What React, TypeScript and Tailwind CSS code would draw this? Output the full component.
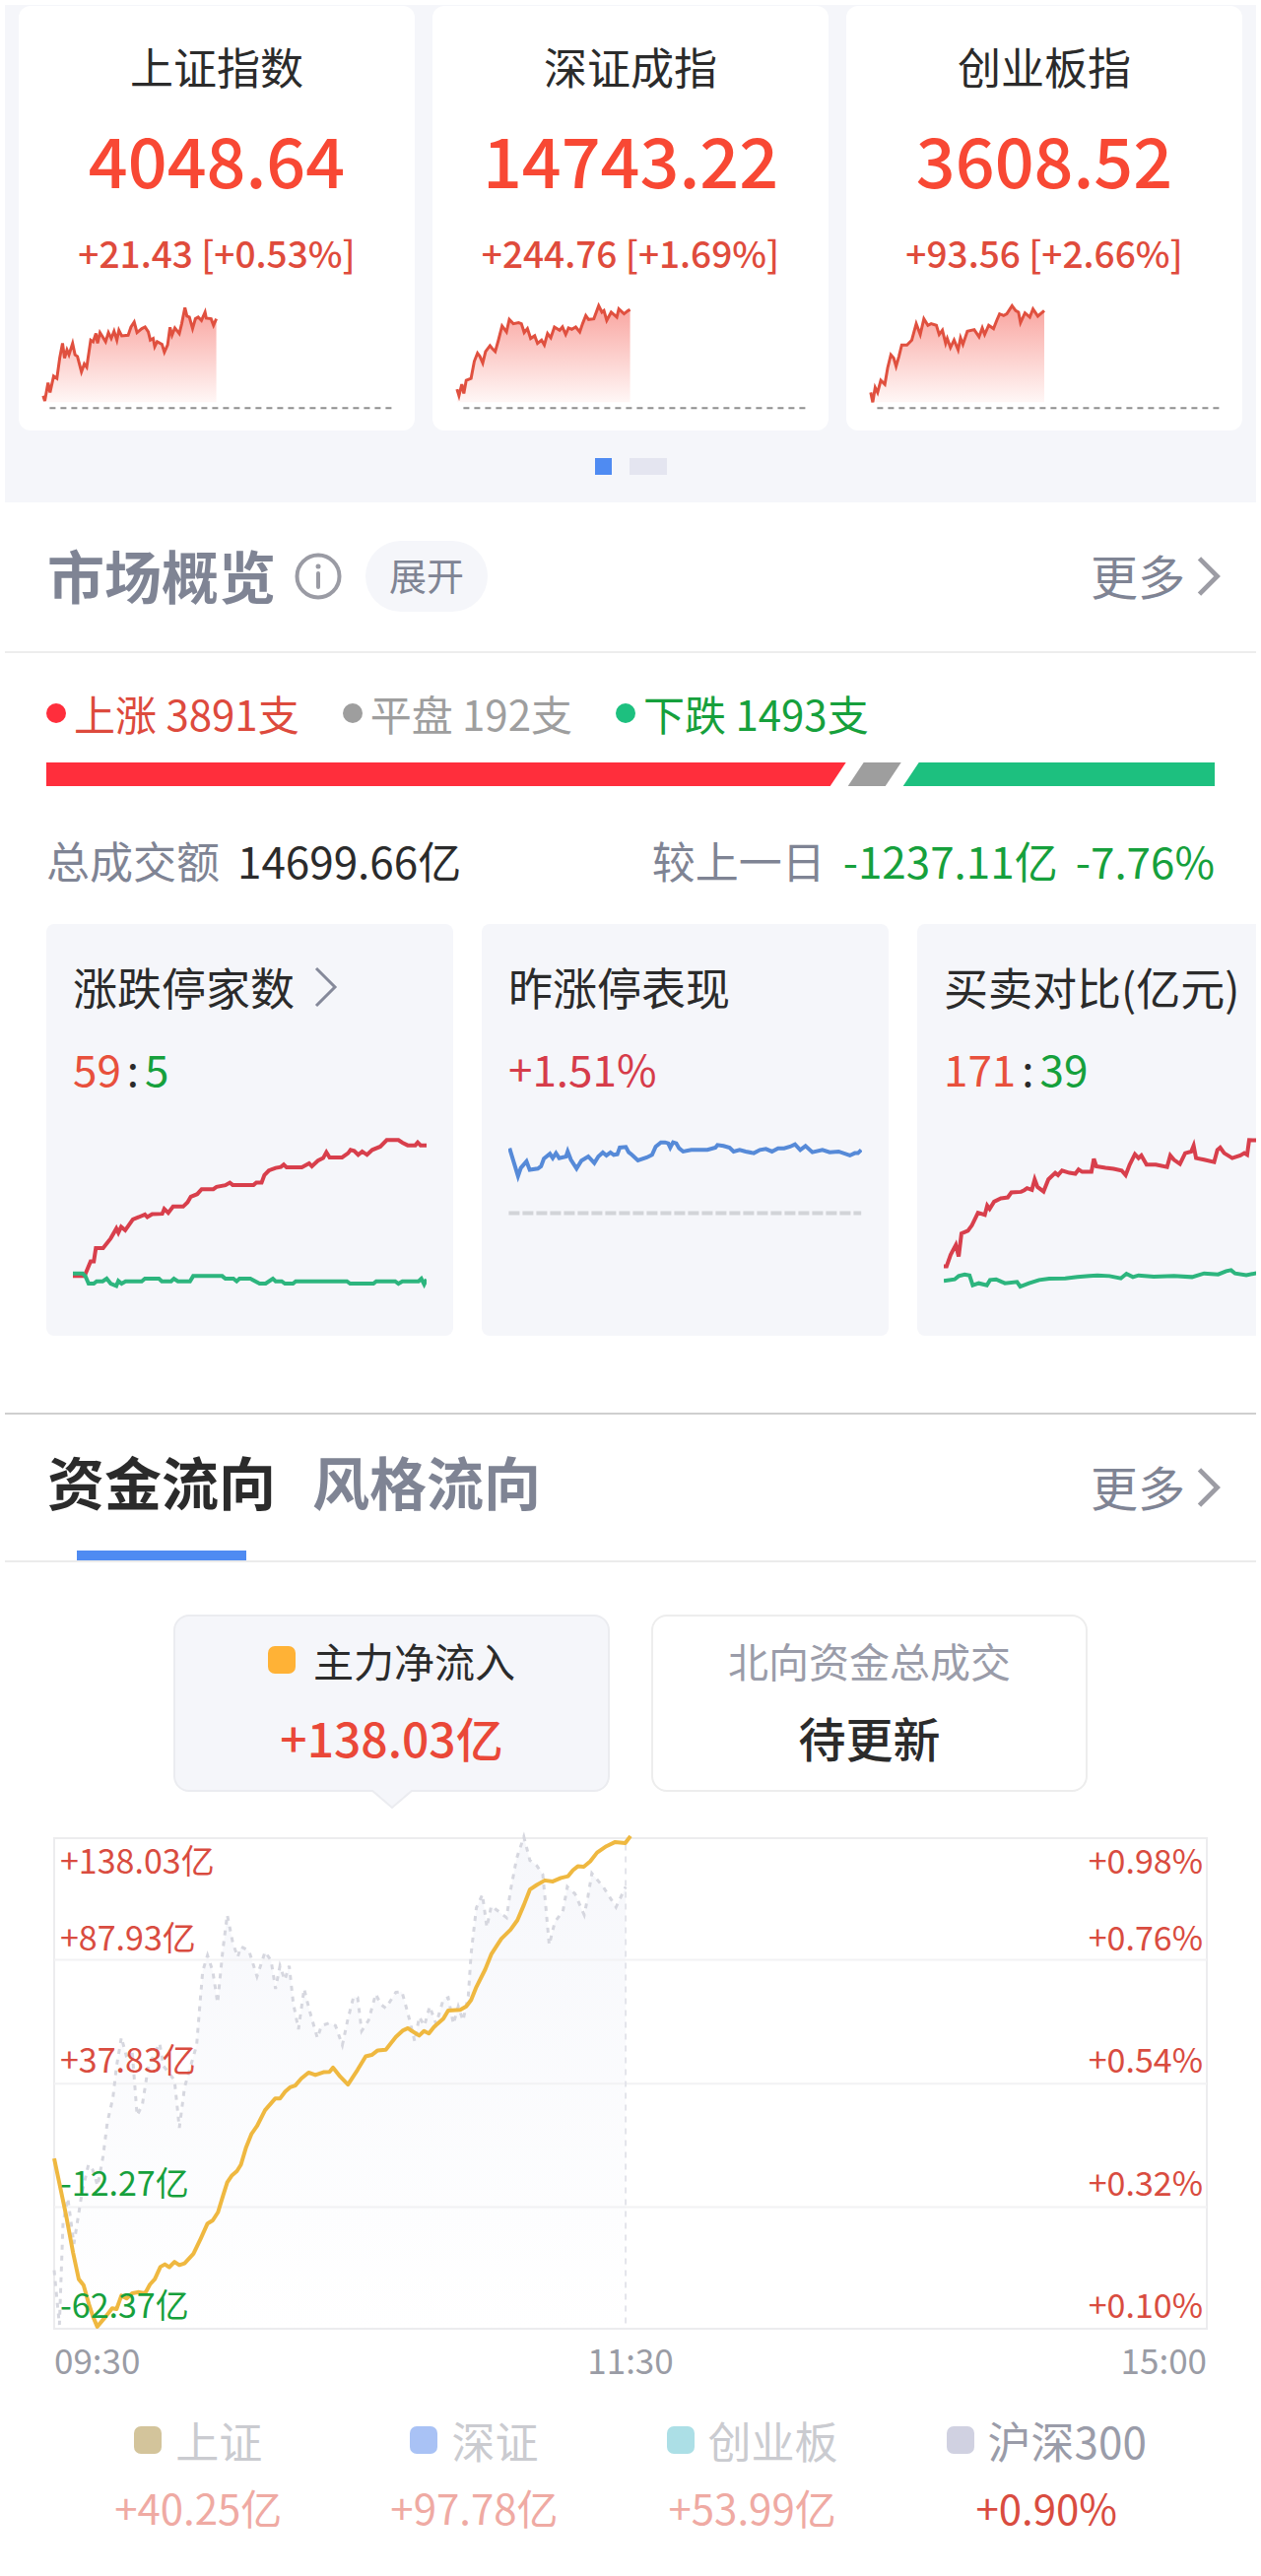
import { useState } from 'react';
import type { ReactNode } from 'react';

type IndexQuote = {
  name: string;
  price: string;
  change: string;
  viewBox: string;
  baseline: string;
  line: string;
};

const quotes: IndexQuote[] = [
  {
    name: '上证指数',
    price: '4048.64',
    change: '+21.43 [+0.53%]',
    viewBox: '100 920 876 340',
    baseline: 'M123 1243H976',
    line: '107,1205 111,1221 119,1165 124,1195 133,1145 141,1152 148,1090 155,1045 160,1090 166,1065 171,1080 180,1045 186,1080 192,1085 202,1132 209,1108 215,1118 225,1035 231,1040 238,1015 242,1045 248,1012 262,1040 269,1012 276,1030 283,1008 290,1035 295,1005 302,1022 318,1020 325,995 333,980 340,1012 352,1000 360,995 368,1010 373,1035 380,1030 384,1055 390,1040 402,1048 408,1072 416,1050 422,996 427,1020 434,998 445,1015 451,985 459,936 464,962 470,965 478,1000 485,970 492,965 500,975 509,950 512,968 524,970 530,990 537,970',
  },
  {
    name: '深证成指',
    price: '14743.22',
    change: '+244.76 [+1.69%]',
    viewBox: '1128 920 876 340',
    baseline: 'M1151 1243H2004',
    line: '1135,1185 1140,1205 1147,1170 1152,1198 1158,1158 1170,1152 1178,1100 1186,1075 1192,1085 1199,1105 1206,1070 1217,1052 1222,1060 1230,1070 1238,1035 1247,992 1258,1010 1265,972 1275,985 1288,982 1295,985 1302,1012 1310,1000 1318,1030 1328,1022 1335,1045 1345,1035 1352,1050 1360,1015 1368,1028 1377,995 1390,1005 1397,995 1405,1018 1412,998 1420,1002 1430,995 1440,1010 1447,985 1455,960 1462,972 1475,970 1487,930 1495,950 1500,945 1507,975 1518,950 1532,965 1537,940 1550,955 1560,945 1565,942',
  },
  {
    name: '创业板指',
    price: '3608.52',
    change: '+93.56 [+2.66%]',
    viewBox: '588 920 876 340',
    baseline: 'M611 1243H1464',
    line: '595,1195 600,1225 606,1180 612,1195 620,1158 630,1170 637,1120 645,1080 652,1090 658,1115 665,1085 672,1050 685,1050 697,1035 708,985 718,1018 727,970 737,990 745,985 758,990 765,1018 773,1005 781,1045 785,1030 793,1058 802,1035 812,1065 818,1028 824,1048 835,1008 852,1003 864,1025 872,998 878,1018 888,990 900,1000 908,975 915,955 925,960 933,955 946,930 955,945 962,950 967,982 978,952 990,965 998,940 1010,962 1026,945',
  },
];

const breadth = [
  { label: '上涨 3891支', text: 'text-[#dd4a3d]', dot: 'bg-[#ff2e3c]', bar: 'bg-[#ff2e3c] [clip-path:polygon(0_0,100%_0,calc(100%-16px)_100%,0_100%)]', share: 811 },
  { label: '平盘 192支', text: 'text-[#9e9e9e]', dot: 'bg-[#9e9e9e]', bar: 'bg-[#9e9e9e] [clip-path:polygon(16px_0,100%_0,calc(100%-16px)_100%,0_100%)]', share: 54 },
  { label: '下跌 1493支', text: 'text-[#16a03c]', dot: 'bg-[#1dc07f]', bar: 'bg-[#1dc07f] [clip-path:polygon(16px_0,100%_0,100%_100%,0_100%)]', share: 316 },
];

const limitUp =
  '181,1130 210,1130 225,1085 233,1085 238,1045 256,1045 275,1015 289,985 294,998 301,980 311,990 330,957 345,950 360,942 366,950 378,941 403,940 408,925 418,937 430,918 455,918 466,905 474,888 490,880 501,865 530,865 538,858 560,853 571,845 578,852 630,852 637,845 650,845 657,822 668,808 685,800 698,797 705,790 712,798 750,798 768,786 775,795 790,778 803,770 811,752 819,768 850,768 865,755 871,745 880,748 890,760 900,750 912,760 925,745 945,735 961,715 990,715 1000,723 1013,731 1032,731 1038,722 1045,731 1060,731';
const limitDown =
  '181,1122 205,1122 212,1130 220,1153 233,1153 240,1146 255,1146 265,1138 275,1153 289,1160 294,1145 302,1153 312,1146 352,1146 360,1138 395,1138 402,1146 425,1146 432,1138 442,1146 472,1146 480,1130 552,1130 560,1138 580,1138 588,1146 595,1138 622,1138 645,1153 660,1153 678,1138 685,1146 700,1146 708,1153 728,1153 735,1146 862,1146 870,1153 928,1153 935,1146 982,1146 990,1153 1000,1146 1040,1146 1047,1138 1054,1155 1060,1140';
const yesterday =
  '1265,740 1286,825 1293,800 1307,780 1315,806 1335,802 1343,795 1350,772 1365,757 1372,770 1380,755 1388,770 1405,765 1409,750 1417,775 1431,802 1443,778 1460,765 1475,785 1485,765 1496,753 1505,762 1515,753 1523,760 1532,758 1538,738 1553,736 1560,752 1568,760 1583,777 1605,768 1618,760 1627,735 1640,722 1650,722 1658,725 1663,738 1670,722 1678,725 1685,740 1695,750 1715,745 1735,745 1755,745 1775,738 1780,730 1795,733 1810,738 1820,750 1835,745 1850,750 1870,755 1885,745 1900,742 1915,750 1930,740 1945,740 1960,735 1972,728 1985,745 1998,733 2015,752 2040,745 2058,752 2080,750 2108,762 2120,755 2128,755 2136,745';
const buyers =
  '778,1100 785,1100 795,1065 808,1035 815,1070 822,1000 838,992 848,975 863,937 880,943 886,915 892,925 903,903 920,893 937,890 946,875 970,873 978,868 985,862 997,867 1004,835 1011,858 1026,872 1038,835 1055,815 1062,822 1072,808 1090,815 1105,818 1113,805 1122,812 1145,812 1151,772 1157,795 1180,800 1200,803 1220,808 1230,822 1240,790 1253,758 1262,770 1269,762 1282,790 1305,790 1333,797 1341,762 1350,775 1365,788 1378,755 1393,750 1399,732 1405,770 1425,775 1450,782 1458,745 1465,738 1475,755 1495,770 1515,762 1525,755 1532,760 1537,715 1560,716 1600,712 1657,708';
const sellers =
  '778,1145 805,1140 815,1130 830,1125 842,1128 850,1158 865,1152 885,1158 893,1142 908,1140 930,1152 960,1148 968,1162 990,1152 1015,1142 1040,1138 1080,1137 1110,1133 1140,1130 1160,1128 1190,1130 1218,1137 1232,1123 1248,1133 1262,1128 1300,1132 1350,1130 1395,1133 1425,1122 1460,1125 1480,1115 1492,1112 1502,1122 1530,1127 1560,1120 1657,1116';

const mainFlow =
  '136,982 165,1140 183,1250 197,1325 209,1342 222,1395 232,1430 243,1460 265,1430 280,1408 291,1410 303,1372 316,1380 330,1365 347,1362 362,1365 374,1340 386,1325 400,1290 411,1283 422,1291 435,1276 447,1285 460,1280 482,1253 500,1210 517,1167 530,1158 543,1135 555,1090 566,1050 578,1030 590,1018 600,1000 613,950 626,913 640,890 660,845 685,812 697,812 710,792 722,780 735,775 750,755 768,738 785,745 805,737 820,736 829,724 847,750 866,772 890,730 910,692 925,688 940,675 960,673 985,637 1003,618 1015,612 1025,620 1043,633 1055,620 1067,627 1080,608 1103,585 1115,562 1145,560 1160,550 1172,532 1185,495 1207,445 1222,402 1247,358 1270,332 1287,305 1303,262 1318,218 1335,205 1355,192 1375,195 1395,185 1413,180 1425,163 1437,152 1452,153 1468,138 1485,113 1508,95 1530,83 1555,86 1568,66';
const hs300 =
  '136,1300 149,1455 158,1165 170,1095 185,1225 205,1080 221,1000 232,1015 244,1060 257,980 268,880 282,810 291,720 303,638 315,690 330,680 342,860 355,830 370,720 398,655 408,720 435,760 447,895 460,780 475,720 490,660 497,560 505,450 517,405 530,450 542,540 555,390 566,290 580,370 592,410 600,380 620,392 640,465 660,395 675,420 686,500 697,435 709,475 720,435 730,540 743,615 757,500 770,560 790,640 800,605 820,597 835,605 852,660 865,590 880,522 890,525 900,620 917,590 935,515 948,545 960,555 985,510 1000,508 1015,570 1032,650 1043,580 1056,605 1069,550 1085,600 1103,530 1115,525 1128,600 1140,550 1152,590 1165,520 1172,400 1185,270 1200,232 1211,325 1222,265 1240,280 1260,298 1270,220 1285,130 1303,68 1318,135 1335,150 1350,175 1357,260 1366,375 1380,310 1400,280 1411,210 1430,230 1453,290 1462,240 1472,172 1500,210 1532,268 1556,210';

const axisRows = [
  ['+87.93亿', '+0.76%', 'text-[#d94c40]'],
  ['+37.83亿', '+0.54%', 'text-[#d94c40]'],
  ['-12.27亿', '+0.32%', 'text-[#16a03c]'],
  ['-62.37亿', '+0.10%', 'text-[#16a03c]'],
];

const legend = [
  { name: '上证', value: '+40.25亿', swatch: 'bg-[#d3c49b]', label: 'text-[#cacbd0]', tone: 'text-[#efaaa3]' },
  { name: '深证', value: '+97.78亿', swatch: 'bg-[#a9c2f5]', label: 'text-[#cacbd0]', tone: 'text-[#efaaa3]' },
  { name: '创业板', value: '+53.99亿', swatch: 'bg-[#acdfe6]', label: 'text-[#cacbd0]', tone: 'text-[#efaaa3]' },
  { name: '沪深300', value: '+0.90%', swatch: 'bg-[#d0d1e1]', label: 'text-[#9a9ca9]', tone: 'text-[#d94c40]' },
];

function Chevron({ className, width = 4 }: { className: string; width?: number }) {
  return (
    <svg viewBox="0 0 24 42" fill="none" stroke="currentColor" strokeWidth={width} className={className}>
      <path d="M2 2L21 21L2 40" />
    </svg>
  );
}

function MoreLink() {
  return (
    <a href="#more" className="flex items-center gap-3 text-[48px] leading-[60px] text-[#7f8494]">
      <span className="pb-1">更多</span>
      <Chevron className="h-10 w-6 text-[#9c9ca4]" width={5} />
    </a>
  );
}

function IndexCard({ quote, id }: { quote: IndexQuote; id: string }) {
  const xs = quote.line.split(' ').map((p) => p.split(',')[0]);
  return (
    <article className="rounded-xl bg-white px-[22px] pt-[31px] pb-[17px] text-center">
      <h3 className="text-[44px] leading-[60px] text-[#2b2b2b]">{quote.name}</h3>
      <p className="mt-6 text-[70px] leading-[80px] font-medium text-[#f84834]">{quote.price}</p>
      <p className="mt-[30px] text-[37px] leading-[50px] font-medium whitespace-nowrap text-[#df4b3c]">{quote.change}</p>
      <svg viewBox={quote.viewBox} preserveAspectRatio="none" fill="none" className="mt-[26px] block h-[113px] w-full">
        <defs>
          <linearGradient id={id} x1="0" y1="0" x2="0" y2="1">
            <stop offset="0" stopColor="#f9a49f" />
            <stop offset="1" stopColor="#fff7f6" />
          </linearGradient>
        </defs>
        <polygon points={`${xs[0]},1225 ${quote.line} ${xs[xs.length - 1]},1225`} fill={`url(#${id})`} />
        <polyline points={quote.line} stroke="#e0503f" strokeWidth="3" vectorEffect="non-scaling-stroke" />
        <path d={quote.baseline} stroke="#8f8f8f" strokeWidth="2" strokeDasharray="6 5" vectorEffect="non-scaling-stroke" />
      </svg>
    </article>
  );
}

type StatCardProps = { title: string; more?: boolean; value: ReactNode; viewBox: string; children: ReactNode };

function StatCard({ title, more, value, viewBox, children }: StatCardProps) {
  return (
    <article className="w-[413px] shrink-0 rounded-lg bg-[#f5f6fa] px-[27px] pt-[34px] pb-11">
      <h3 className="flex items-center gap-5 text-[45px] leading-[60px] whitespace-nowrap text-[#2b2b2b]">
        {title}
        {more && <Chevron className="h-[42px] w-6 text-[#85899a]" width={3} />}
      </h3>
      <p className="mt-[22px] text-[44px] leading-[60px] text-[#2b2b2b]">{value}</p>
      <svg viewBox={viewBox} preserveAspectRatio="none" fill="none" strokeWidth="4" className="mt-[35px] block h-[163px] w-full">
        {children}
      </svg>
    </article>
  );
}

function Ratio({ up, down }: { up: number; down: number }) {
  return (
    <>
      <span className="text-[#e8503c]">{up}</span>
      <span className="px-[6px]">:</span>
      <span className="text-[#16a03c]">{down}</span>
    </>
  );
}

export default function App() {
  const [tab, setTab] = useState('资金流向');

  return (
    <main className="bg-white px-[5px] pt-[5px] pb-9 font-['Noto_Sans_CJK_SC',sans-serif]">
      <section className="bg-[#f5f6fa] px-[14px] pt-px pb-[28px]">
        <div className="grid grid-cols-3 gap-[18px]">
          {quotes.map((q, i) => (
            <IndexCard key={q.name} quote={q} id={`fill-${i}`} />
          ))}
        </div>
        <div className="mt-[28px] flex justify-center gap-[18px]">
          <span className="size-[17px] bg-[#4f8bf2]" />
          <span className="h-[17px] w-[38px] bg-[#e4e5f0]" />
        </div>
      </section>

      <section>
        <header className="flex h-[153px] items-center border-b-2 border-[#ededed] pr-[36px] pb-[2px] pl-[43px]">
          <h2 className="pb-1 text-[58px] leading-[80px] font-bold text-[#7f8494]">市场概览</h2>
          <svg viewBox="0 0 48 48" fill="none" stroke="#9a9ba4" className="ml-[19px] size-[48px]">
            <title>说明</title>
            <circle cx="24" cy="24" r="21.5" strokeWidth="4" />
            <path d="M24 21v14" strokeWidth="4" strokeLinecap="round" />
            <circle cx="24" cy="14" r="2.5" fill="#9a9ba4" stroke="none" />
          </svg>
          <button type="button" className="ml-6 h-[72px] rounded-full bg-[#f5f6fa] px-6 pb-1 text-[38px] leading-[68px] text-[#7f8494]">
            展开
          </button>
          <div className="ml-auto">
            <MoreLink />
          </div>
        </header>

        <div className="px-[42px]">
          <ul className="mt-[31px] flex gap-[44px] text-[42px] leading-[60px]">
            {breadth.map((b) => (
              <li key={b.label} className={`flex items-center gap-[8px] ${b.text}`}>
                <span className={`size-[20px] rounded-full ${b.dot}`} />
                {b.label}
              </li>
            ))}
          </ul>
          <div className="mt-[20px] flex h-[24px] gap-[2px]">
            {breadth.map((b) => (
              <span key={b.label} className={b.bar} style={{ flex: `${b.share} 1 0` }} />
            ))}
          </div>
          <div className="mt-[45px] flex justify-between text-[44px] leading-[60px] whitespace-nowrap">
            <p className="flex gap-[18px] text-[#7f8494]">
              总成交额 <span className="text-[#2b2b2b]">14699.66亿</span>
            </p>
            <p className="flex gap-[18px] text-[#7f8494]">
              较上一日 <span className="text-[#16a03c]">-1237.11亿</span>
              <span className="text-[#16a03c]">-7.76%</span>
            </p>
          </div>
        </div>

        <div className="mt-[35px] flex gap-[29px] overflow-hidden pl-[42px]">
          <StatCard title="涨跌停家数" more viewBox="181 690 879 490" value={<Ratio up={59} down={5} />}>
            <polyline points={limitUp} stroke="#d83f4c" vectorEffect="non-scaling-stroke" />
            <polyline points={limitDown} stroke="#2db57e" vectorEffect="non-scaling-stroke" />
          </StatCard>
          <StatCard title="昨涨停表现" viewBox="1262 690 876 490" value={<span className="text-[#d63c4a]">+1.51%</span>}>
            <polyline points={yesterday} stroke="#568ad8" vectorEffect="non-scaling-stroke" />
            <path d="M1263 938H2136" stroke="#d2d4d8" strokeDasharray="11 3" vectorEffect="non-scaling-stroke" />
          </StatCard>
          <StatCard title="买卖对比(亿元)" viewBox="778 690 879 490" value={<Ratio up={171} down={39} />}>
            <polyline points={buyers} stroke="#d83f4c" vectorEffect="non-scaling-stroke" />
            <polyline points={sellers} stroke="#2db57e" vectorEffect="non-scaling-stroke" />
          </StatCard>
        </div>
      </section>

      <section className="mt-[78px] border-t-2 border-[#cfcfcf]">
        <header className="flex h-[150px] items-stretch border-b-2 border-[#ebebeb] pr-[36px] pl-[43px]">
          <div role="tablist" className="flex gap-[37px]">
            {['资金流向', '风格流向'].map((name) => (
              <button
                key={name}
                type="button"
                role="tab"
                aria-selected={tab === name}
                onClick={() => setTab(name)}
                className={`relative pb-[14px] text-[58px] leading-[80px] font-bold ${tab === name ? 'text-[#2b2b2b]' : 'text-[#7f8494]'}`}
              >
                {name}
                {tab === name && <span className="absolute inset-x-[30px] bottom-0 h-[10px] bg-[#4f8bf2]" />}
              </button>
            ))}
          </div>
          <div className="ml-auto flex items-center">
            <MoreLink />
          </div>
        </header>

        <div className="mt-[53px] flex justify-center gap-[42px]">
          <button type="button" className="relative h-[180px] w-[443px] rounded-2xl border-2 border-[#ebecf0] bg-[#f5f6fa] pb-2">
            <span className="flex items-center justify-center gap-[18px] text-[41px] leading-[60px] text-[#2b2b2b]">
              <span className="size-[28px] rounded-[7px] bg-[#ffb236]" />
              主力净流入
            </span>
            <span className="mt-[16px] block text-[48px] leading-[64px] font-medium text-[#ea4838]">+138.03亿</span>
            <svg viewBox="0 0 46 20" fill="#f5f6fa" stroke="#ebecf0" strokeWidth="2" className="absolute top-full left-1/2 h-5 w-[46px] -translate-x-1/2">
              <path d="M0 0H2L23 18L44 0H46" />
            </svg>
          </button>
          <button type="button" className="h-[180px] w-[443px] rounded-2xl border-2 border-[#ededed] pb-2">
            <span className="block text-[41px] leading-[60px] text-[#9a9ca9]">北向资金总成交</span>
            <span className="mt-[16px] block text-[48px] leading-[64px] font-medium text-[#2b2b2b]">待更新</span>
          </button>
        </div>

        <div className="mx-[50px] mt-[47px]">
          <div className="relative h-[498px] text-[34px] leading-[44px]">
            <svg viewBox="136 72 2864 1394" preserveAspectRatio="none" fill="none" className="absolute inset-0 size-full overflow-visible">
              <defs>
                <linearGradient id="hs300-fill" x1="0" y1="0" x2="0" y2="1">
                  <stop offset="0" stopColor="#f6f7fb" />
                  <stop offset="1" stopColor="#ffffff" />
                </linearGradient>
              </defs>
              <polygon points={`136,1466 ${hs300} 1556,1466`} fill="url(#hs300-fill)" />
              <path d="M136 72H3000V1466H136Z" stroke="#ececee" strokeWidth="2" vectorEffect="non-scaling-stroke" />
              <path d="M136 418H3000M136 770H3000M136 1120H3000" stroke="#f2f2f4" strokeWidth="2" vectorEffect="non-scaling-stroke" />
              <path d="M1556 90V1466" stroke="#e3e4ea" strokeWidth="2" strokeDasharray="6 6" vectorEffect="non-scaling-stroke" />
              <polyline points={hs300} stroke="#d6d7df" strokeWidth="3" strokeDasharray="5 6" vectorEffect="non-scaling-stroke" />
              <polyline points={mainFlow} stroke="#efb840" strokeWidth="4" strokeLinejoin="round" vectorEffect="non-scaling-stroke" />
            </svg>
            <div className="relative grid h-full grid-rows-4 pr-1 pl-[6px]">
              {axisRows.map(([flow, pct, tone], i) => (
                <div key={flow} className="flex flex-col justify-between pb-[3px]">
                  <div className="flex justify-between text-[#d94c40]">
                    {i === 0 && (
                      <>
                        <span>+138.03亿</span>
                        <span>+0.98%</span>
                      </>
                    )}
                  </div>
                  <div className="flex justify-between">
                    <span className={tone}>{flow}</span>
                    <span className="text-[#d94c40]">{pct}</span>
                  </div>
                </div>
              ))}
            </div>
          </div>
          <div className="mt-[7px] flex justify-between text-[35px] leading-[48px] text-[#9a9ca5]">
            <span>09:30</span>
            <span>11:30</span>
            <span>15:00</span>
          </div>
        </div>

        <ul className="mt-[26px] flex justify-center gap-[110px]">
          {legend.map((l) => (
            <li key={l.name} className="flex flex-col items-center">
              <span className={`flex items-center gap-[14px] text-[44px] leading-[64px] ${l.label}`}>
                <span className={`size-[28px] rounded-[7px] ${l.swatch}`} />
                {l.name}
              </span>
              <span className={`mt-[6px] text-[42px] leading-[60px] ${l.tone}`}>{l.value}</span>
            </li>
          ))}
        </ul>
      </section>
    </main>
  );
}
